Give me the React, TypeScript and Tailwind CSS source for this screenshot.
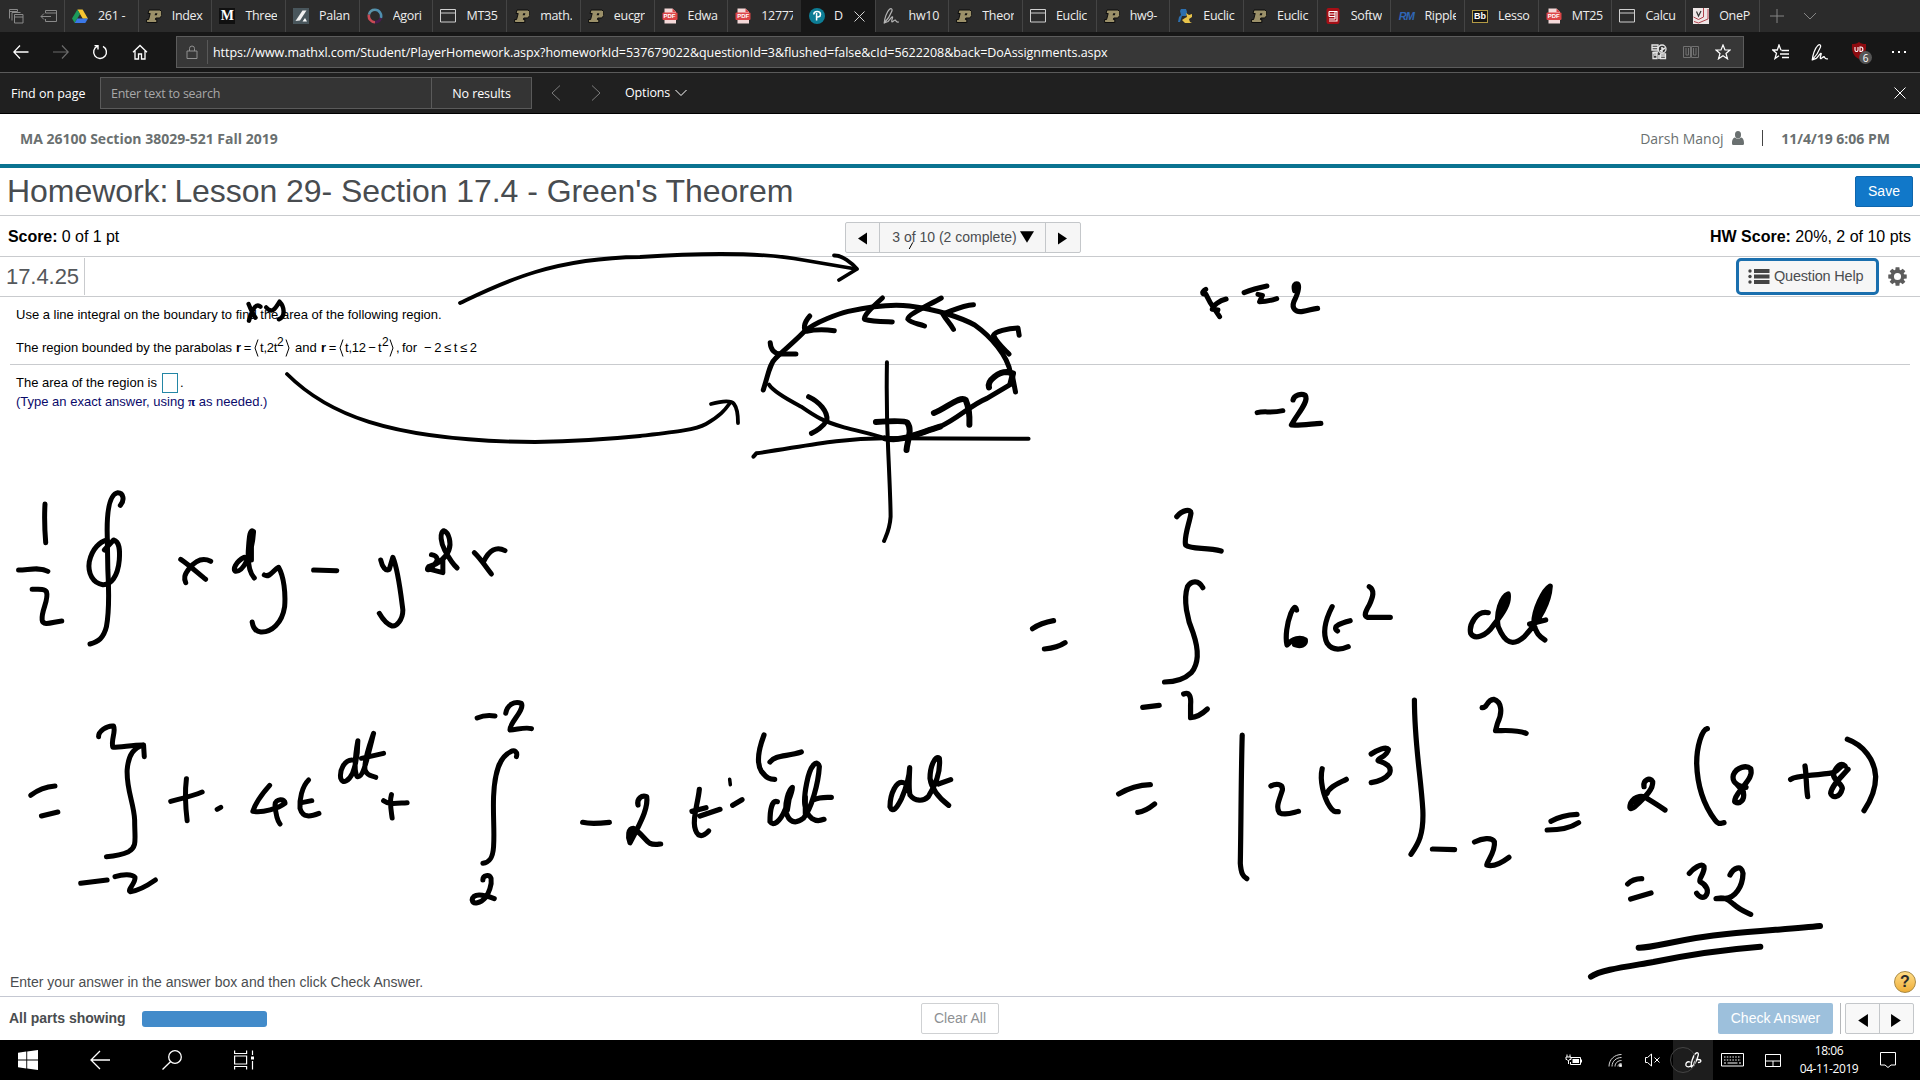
import React from "react";

type Kind = "drive" | "purdue" | "medium" | "palan" | "agori" | "page" | "pdf" | "pearson" | "ink" | "python" | "soft" | "rm" | "bb" | "onep";

const TABS: { label: string; kind: Kind; active?: boolean }[] = [
  { label: "261 -", kind: "drive" },
  { label: "Index", kind: "purdue" },
  { label: "Three", kind: "medium" },
  { label: "Palan", kind: "palan" },
  { label: "Agori", kind: "agori" },
  { label: "MT35", kind: "page" },
  { label: "math.", kind: "purdue" },
  { label: "eucgr", kind: "purdue" },
  { label: "Edwa", kind: "pdf" },
  { label: "12777", kind: "pdf" },
  { label: "D", kind: "pearson", active: true },
  { label: "hw10", kind: "ink" },
  { label: "Theor", kind: "purdue" },
  { label: "Euclic", kind: "page" },
  { label: "hw9-", kind: "purdue" },
  { label: "Euclic", kind: "python" },
  { label: "Euclic", kind: "purdue" },
  { label: "Softw", kind: "soft" },
  { label: "Ripple", kind: "rm" },
  { label: "Lesso", kind: "bb" },
  { label: "MT25", kind: "pdf" },
  { label: "Calcu", kind: "page" },
  { label: "OneP", kind: "onep" },
];

function Favicon({ kind }: { kind: Kind }) {
  const box = "h-4 w-4 shrink-0";
  switch (kind) {
    case "drive":
      return (
        <svg className={box} viewBox="0 0 16 16">
          <path d="M5.4 1.5h5.2L16 10.8h-5.2z" fill="#f7c631" />
          <path d="M5.4 1.5 8 6 2.7 15 0 10.6z" fill="#1c9a5b" />
          <path d="M5.3 10.6H16L13.3 15H2.7z" fill="#3b78e7" />
        </svg>
      );
    case "purdue":
      return (
        <svg className={box} viewBox="0 0 16 16">
          <path d="M3 2h11l1.700 1.700v4L13.700 10H9.800l-.4 1.500h1.400v3H.6v-3h2L4.200 5.500H2z" fill="#9b9069" stroke="#0d0d0d" strokeWidth="1" />
          <path d="M9.200 5.200h2.200l-.6 2h-2.200z" fill="#111" />
        </svg>
      );
    case "medium":
      return (
        <span className="flex h-4 w-4 shrink-0 items-center justify-center bg-[#101010] font-['Liberation_Serif',serif] text-[14px] leading-none font-bold text-white">M</span>
      );
    case "palan":
      return (
        <svg className={box} viewBox="0 0 16 16">
          <rect width="16" height="16" fill="#49565c" />
          <path d="M2.500 13 9.500 2.500h4L7 12.500z" fill="#f1f1f1" />
          <path d="M9.500 13.500 12 10l2 3.500z" fill="#fff" />
        </svg>
      );
    case "agori":
      return (
        <svg className={box} viewBox="0 0 16 16" fill="none" strokeWidth="2.600">
          <path d="M8 1.800A6.200 6.200 0 0 1 13.800 10" stroke="#4f8fb0" />
          <path d="M13.800 10A6.200 6.200 0 0 1 8 14.200" stroke="#4a1d4f" />
          <path d="M8 14.200A6.200 6.200 0 0 1 2 6.500" stroke="#c84a55" />
          <path d="M2 6.500A6.200 6.200 0 0 1 8 1.800" stroke="#5b93a8" />
        </svg>
      );
    case "page":
      return (
        <svg className={box} viewBox="0 0 16 16" fill="none" stroke="#cfcfcf" strokeWidth="1">
          <path d="M.5 1.500h15v12.500H.5zM.5 5h15" />
        </svg>
      );
    case "pdf":
      return (
        <span className="relative flex h-4 w-4 shrink-0 items-center justify-center">
          <svg className="absolute inset-0 h-4 w-4" viewBox="0 0 16 16">
            <path d="M2.500 .5h8l3.500 3.500V15.500H2.500z" fill="#f5d9d9" />
            <path d="M10.500 .5 14 4h-3.500z" fill="#d44" />
            <rect x=".5" y="4.500" width="15" height="7.500" rx="1" fill="#dc4547" />
          </svg>
          <span className="relative font-['Liberation_Sans',sans-serif] text-[6px] leading-none font-bold text-white">PDF</span>
        </span>
      );
    case "pearson":
      return (
        <svg className={box} viewBox="0 0 16 16" fill="none">
          <circle cx="8" cy="8" r="8" fill="#0d7d95" />
          <path d="M4.800 6.500c0-4 6.700-4 6.700 0 0 2.800-3.500 3-4.300 1.300M7.600 5v7.500" stroke="#fff" strokeWidth="1.500" />
        </svg>
      );
    case "ink":
      return <PenIcon className="h-4 w-4 shrink-0 text-[#b5b5b5]" />;
    case "python":
      return (
        <svg className={box} viewBox="0 0 16 16">
          <path d="M4 1h5l1 3-1 4H5l-2 6H1l1-5 2-2-1-4z" fill="#2d6fae" />
          <path d="M9 5l3 2 3-1v3l-3 2 1 3 2 1H8l-3-3 3-2 2-1z" fill="#e8c34a" />
        </svg>
      );
    case "soft":
      return (
        <svg className={box} viewBox="0 0 16 16">
          <rect x="1.500" y="0" width="13" height="16" rx="2" fill="#a60f16" />
          <path d="M4 3.500h8v9.500H4M4 3.500v5M4 6h6M4 8.500h6M4 11h6M10 3.500V11" fill="none" stroke="#fff" strokeWidth="1.100" />
        </svg>
      );
    case "rm":
      return (
        <span className="flex h-4 w-4 shrink-0 items-center justify-center font-['Liberation_Sans',sans-serif] text-[11px] leading-none font-bold tracking-[-1px] text-[#2f66b5] italic">RM</span>
      );
    case "bb":
      return (
        <span className="flex h-[13px] w-4 shrink-0 items-center justify-center border border-[#b39a44] bg-[#161616] font-['Liberation_Sans',sans-serif] text-[9px] leading-none font-bold text-white">Bb</span>
      );
    case "onep":
      return (
        <svg className={box} viewBox="0 0 16 16" fill="none">
          <rect width="16" height="16" fill="#efe7e7" />
          <path d="M10.500 0v9l-5 2.500-5-2.500M1 13.500l4.500 1.500 9.500-4V1" stroke="#b2434c" strokeWidth="1" />
          <path d="M3.500 3.500 5.500 8l2.500-5" stroke="#333" strokeWidth="1.200" />
        </svg>
      );
  }
}

function PenIcon({ className }: { className: string }) {
  return (
    <svg className={className} viewBox="0 0 16 16" fill="none" stroke="currentColor" strokeWidth="1.200" strokeLinecap="round" strokeLinejoin="round">
      <path d="M1.200 15C1.500 11 3.500 4 6.500 1.300 8.300-.1 9.600 1 8.800 3.200 7.600 6.500 4.500 11.500 1.200 15M2 10.500 1.200 15 5 13.500C6.500 12 8 9.500 9.200 8.800 10.500 8.500 8.300 12 8.800 13.500 9.300 14.800 11 12 12.200 12 13.200 12.200 12.500 14.500 15.500 14" />
    </svg>
  );
}

function TabStrip() {
  return (
    <div className="flex h-8 bg-[#2b2b2b] text-[#ededed]">
      <div className="flex w-16 shrink-0 items-center gap-4 pl-[9px] text-[#8a8a8a]">
        <svg className="h-4 w-[15px]" viewBox="0 0 15 16" fill="none" stroke="currentColor">
          <path d="M.5 10.500V1.500h8M.5 3.500h8v-2M3 12.500V4.500h8.500M5.500 6.500h8.500v8.500H5.500zM5.500 9h8.500" />
        </svg>
        <svg className="h-4 w-[17px]" viewBox="0 0 17 16" fill="none" stroke="currentColor">
          <path d="M5.500 5V2.500h11v11h-11V11M5.500 5h11M1 8.500h10M4 5.500l-3 3 3 3" />
        </svg>
      </div>
      {TABS.map((t, i) =>
        t.active ? (
          <div key={i} className="flex w-[73.700px] shrink-0 items-center bg-[#171717] pl-2">
            <Favicon kind={t.kind} />
            <span className="ml-[9px] text-[12.500px]">{t.label}</span>
            <svg className="ml-[11px] h-[11px] w-[11px]" viewBox="0 0 11 11" fill="none" stroke="#d5d5d5">
              <path d="M.5.5l10 10M10.500.5l-10 10" />
            </svg>
          </div>
        ) : (
          <div key={i} className="flex w-[73.700px] shrink-0 items-center border-l border-[#444] pl-[7px]">
            <Favicon kind={t.kind} />
            <span className="ml-[10px] w-[31.500px] overflow-hidden text-[12.500px] tracking-[-0.300px] whitespace-nowrap">{t.label}</span>
          </div>
        ),
      )}
      <div className="flex flex-1 items-center gap-[19px] border-l border-[#444] pl-[10px] text-[#858585]">
        <svg className="h-[14px] w-[14px]" viewBox="0 0 14 14" fill="none" stroke="currentColor">
          <path d="M7 0v14M0 7h14" />
        </svg>
        <svg className="h-[8px] w-[14px]" viewBox="0 0 14 8" fill="none" stroke="currentColor">
          <path d="M1 1l6 6 6-6" />
        </svg>
      </div>
    </div>
  );
}

function AddressBar() {
  return (
    <div className="flex h-10 items-center bg-[#171717] text-white">
      <svg className="ml-[13px] h-4 w-4" viewBox="0 0 16 16" fill="none" stroke="currentColor" strokeWidth="1.300">
        <path d="M15.500 8H1M7 1.500.8 8 7 14.500" />
      </svg>
      <svg className="ml-[24px] h-4 w-4 text-[#6b6b6b]" viewBox="0 0 16 16" fill="none" stroke="currentColor" strokeWidth="1.200">
        <path d="M0 8h14.500M9 1.500 15.200 8 9 14.500" />
      </svg>
      <svg className="ml-[23px] h-4 w-4" viewBox="0 0 16 16" fill="none" stroke="currentColor" strokeWidth="1.400">
        <path d="M5.500 2.200A6.400 6.400 0 1 0 11 2.400M2.500 1.600h3.500v4" />
      </svg>
      <svg className="ml-[24px] h-4 w-4" viewBox="0 0 16 16" fill="none" stroke="currentColor" strokeWidth="1.300">
        <path d="M1 8.300 8 1.500l7 6.800M3 7v8h3.500v-5h3v5H13V7" />
      </svg>
      <div className="ml-[28px] flex h-8 w-[1568px] items-center border border-[#5c5c5c] bg-[#373737]">
        <svg className="ml-[9px] h-[14px] w-[12px]" viewBox="0 0 12 14" fill="none" stroke="#909090">
          <path d="M1 6h10v7.500H1zM3.500 6V3.500a2.500 2.500 0 0 1 5 0V6" />
        </svg>
        <div className="ml-[9px] h-6 w-px bg-[#585858]" />
        <span className="mt-[2px] ml-[5px] flex-1 text-[12.500px] tracking-[-0.042px] whitespace-nowrap">
          https://www.mathxl.com/Student/PlayerHomework.aspx?homeworkId=537679022&amp;questionId=3&amp;flushed=false&amp;cId=5622208&amp;back=DoAssignments.aspx
        </span>
        <svg className="h-4 w-4" viewBox="0 0 16 16" fill="none" stroke="#e6e6e6" strokeWidth="1.300">
          <path d="M1 1h6v5H1zM1 3.500h6M2 14.500V9h4v5.500zM9.500 10h5v4.500h-5z" />
          <circle cx="11" cy="5" r="4" />
          <path d="M11 3v5M9 7l5-3M1.500 8.500 7 8M8 11v4M3 11h3M10 12h4" strokeWidth="1.600" />
        </svg>
        <svg className="ml-[16px] h-[14px] w-4" viewBox="0 0 16 14" fill="none" stroke="#717171">
          <path d="M.5 1.500h7v11h-7zM8.500 1.500h7v11h-7zM3 3v7h2.500V3M10.500 3v7H13V3" />
        </svg>
        <svg className="mr-[12px] ml-[16px] h-4 w-4" viewBox="0 0 16 16" fill="none" stroke="#fff" strokeWidth="1.200">
          <path d="M8 1l2 5h5l-4 3.500 1.500 5.300L8 11.700l-4.500 3.100L5 9.500 1 6h5z" />
        </svg>
      </div>
      <svg className="ml-[28px] h-4 w-[17px]" viewBox="0 0 17 16" fill="none" stroke="#fff" strokeWidth="1.300">
        <path d="M9 6.200 7 1 5.300 6H.8l3.700 3.300L3 14.500l4-2.800M9.500 6.500H17M8 10h9M10 13.500h7" />
      </svg>
      <PenIcon className="ml-[22px] h-[17px] w-[17px] text-white" />
      <div className="relative ml-[23px] h-5 w-[20px]">
        <svg className="h-[17px] w-[16px]" viewBox="0 0 16 17">
          <path d="M8 0c2.500 2 5 2 7 2 .5 7-1 12-7 15C2 14 .5 9 1 2c2 0 4.500 0 7-2z" fill="#8d0b10" />
          <path d="M4 5v3a1.500 1.500 0 0 0 3 0V5M9 5v4.500h1c2.500 0 2.500-4.500 0-4.500z" fill="none" stroke="#fff" strokeWidth="1.100" />
        </svg>
        <span className="absolute top-[9px] left-[8px] flex h-[13px] w-[13px] items-center justify-center rounded-full bg-[#555] text-[10px] leading-none">6</span>
      </div>
      <svg className="ml-[20px] h-[4px] w-4" viewBox="0 0 16 4" fill="#fff">
        <path d="M1 1h2v2H1zM7 1h2v2H7zM13 1h2v2h-2z" />
      </svg>
    </div>
  );
}

function FindBar() {
  return (
    <div className="flex h-[42px] items-center border-t-[1.500px] border-b border-t-[#5a5a5a] border-b-black bg-[#202020] text-[12.500px] text-white">
      <span className="mt-[2px] w-[100px] pl-[11px] tracking-[-0.050px]">Find on page</span>
      <div className="flex h-8 w-[432px] items-center border border-[#5a5a5a] bg-[#343434]">
        <span className="mt-[2px] flex-1 pl-[10px] tracking-[-0.250px] text-[#a8a8a8]">Enter text to search</span>
        <span className="flex h-full w-[100px] items-center justify-center border-l border-[#5a5a5a] pt-[2px] tracking-[-0.100px]">No results</span>
      </div>
      <svg className="ml-[19px] h-4 w-[10px]" viewBox="0 0 10 16" fill="none" stroke="#7c7c7c">
        <path d="M9 .5 1 8l8 7.500" />
      </svg>
      <svg className="ml-[30px] h-4 w-[10px]" viewBox="0 0 10 16" fill="none" stroke="#7c7c7c">
        <path d="M1 .5 9 8l-8 7.500" />
      </svg>
      <span className="ml-[24px] tracking-[-0.150px]">Options</span>
      <svg className="ml-[5px] h-[8px] w-[12px]" viewBox="0 0 12 8" fill="none" stroke="#fff">
        <path d="M.5 1 6 6.500 11.500 1" />
      </svg>
      <svg className="mr-[14px] ml-auto h-[12px] w-[12px]" viewBox="0 0 12 12" fill="none" stroke="#fff">
        <path d="M.5.5l11 11M11.500.5l-11 11" />
      </svg>
    </div>
  );
}

function Tri({ dir, className }: { dir: "left" | "right" | "down"; className: string }) {
  const d = dir === "left" ? "M10 0v12L1 6z" : dir === "right" ? "M0 0v12l9-6z" : "M-1 1h12L5 11z";
  return (
    <svg className={className} viewBox="-1 0 12 12" fill="#000">
      <path d={d} />
    </svg>
  );
}

function Angle({ flip, className }: { flip?: boolean; className: string }) {
  return (
    <svg className={className} viewBox="0 0 5 18" fill="none" stroke="#000">
      <path d={flip ? "M1 .5 4 9 1 17.500" : "M4 .5 1 9l3 8.500"} />
    </svg>
  );
}

function Question() {
  return (
    <div className="flex-1 font-['Liberation_Sans',sans-serif] text-[13px] text-black">
      <div className="mx-[10px] h-[68px] border-b border-[#c9cbce] pl-[6px]">
        <p className="pt-[8px] leading-[20px] whitespace-nowrap">Use a line integral on the boundary to find the area of the following region.</p>
        <div className="mt-[12px] flex h-[22px] items-center leading-[20px] whitespace-nowrap">
          <span className="w-[220px]">The region bounded by the parabolas</span>
          <span className="w-[18px] tracking-[-0.500px]"><b>r</b> =</span>
          <Angle className="h-[18px] w-[5px]" />
          <span className="ml-[1px] w-[17px] tracking-[-0.200px]">t,2t</span>
          <sup className="-top-[6px] w-[8px] text-[12px] leading-none">2</sup>
          <Angle flip className="h-[18px] w-[5px]" />
          <span className="ml-[5px] w-[26px]">and</span>
          <span className="w-[18px] tracking-[-0.500px]"><b>r</b> =</span>
          <Angle className="h-[18px] w-[5px]" />
          <span className="ml-[1px] w-[37px] tracking-[-0.200px]">t,12&thinsp;−&thinsp;t</span>
          <sup className="-top-[6px] w-[7px] text-[12px] leading-none">2</sup>
          <Angle flip className="h-[18px] w-[5px]" />
          <span className="ml-[2px] w-[6px]">,</span>
          <span className="w-[22px]">for</span>
          <span>−&thinsp;2&thinsp;≤&thinsp;t&thinsp;≤&thinsp;2</span>
        </div>
      </div>
      <div className="pt-[7px] pl-4">
        <div className="flex h-[22px] items-center whitespace-nowrap">
          <span className="w-[146px]">The area of the region is</span>
          <span className="h-[20px] w-[16px] border border-[#2386a5] bg-white" />
          <span className="ml-[2px]">.</span>
        </div>
        <p className="leading-[16px] whitespace-nowrap text-[#0a0a6b]">
          (Type an exact answer, using <span className="font-['Liberation_Serif',serif] leading-none font-bold">π</span> as needed.)
        </p>
      </div>
    </div>
  );
}

/* Pen strokes, grouped by the region of the page they were written in. */
const INK: { t: string; w: number; d: string[] }[] = [
  {
    t: "",
    w: 3.800,
    d: [
      "M460 303C500 284 550 258 640 257C700 253 760 252 803 260L856 269",
      "M834 255.500C842 255 852 263 857 269L839 280",
      "M287 374C325 412 385 441 535 442C590 441 640 436 640 436C675 432 695 430 706 424C720 416 725 410 730 403",
      "M711 404C722 401 731 400 734 404C738 409 738 417 738 423",
    ],
  },
  {
    t: "translate(0 120) scale(.408163 .333333)",
    w: 4.400,
    d: ["M609 552C615 570 620 585 626 593M638 560C625 545 615 580 610 602", "M652 562C665 580 672 572 685 545C697 560 700 590 683 598"],
  },
  { t: "translate(640 220) scale(.408163 .333333)", w: 1, d: ["M668 68L660 86"] },
  {
    t: "translate(640 220) scale(.408163 .333333)",
    w: 4,
    d: [
      "M605 427C604 500 606 640 608 690C612 800 614 850 614 890C612 930 602 950 598 963",
      "M278 710L285 700C400 680 480 655 600 655L952 656",
      "M316 494C330 520 380 550 395 560C430 590 450 605 500 622C540 635 580 645 600 655",
    ],
  },
  {
    t: "translate(640 220) scale(.408163 .333333)",
    w: 5,
    d: [
      "M302 510C315 460 318 430 332 415L343 402C365 378 390 350 402 335C430 305 490 280 510 274C570 258 620 252 660 258C730 268 790 295 820 315C860 350 900 405 908 460",
      "M319 368C320 390 330 402 345 402L382 402",
      "M416 288C400 310 400 330 408 334C430 328 450 328 476 332",
      "M594 234C570 260 545 290 550 298C570 305 600 305 618 306",
      "M738 234C700 260 655 285 656 297C665 310 680 310 697 318",
      "M817 254C790 255 760 275 742 282C750 300 760 310 768 328",
      "M929 346L926 324C900 325 870 335 866 346C875 370 890 385 904 402",
      "M413 530C440 545 460 575 458 600C450 620 430 635 420 640",
      "M600 655C640 665 670 645 735 620C780 595 810 555 850 535L912 490L912 465L920 516",
      "M1386 208C1376 215 1376 224 1386 222L1397 248L1420 290M1436 237C1420 242 1404 255 1402 268L1416 270",
      "M1480 218C1500 208 1520 202 1536 198M1514 223L1525 226L1518 245C1535 245 1550 240 1560 236",
      "M1512 578C1530 572 1545 580 1575 572",
    ],
  },
  {
    t: "translate(640 220) scale(.408163 .333333)",
    w: 6,
    d: [
      "M855 502C850 480 880 455 900 456L914 460L908 490",
      "M578 606C620 602 650 602 655 608C668 630 655 660 653 690",
      "M720 579C750 565 785 525 798 540C805 560 808 590 807 614",
      "M600 655C640 665 670 645 735 620",
    ],
  },
  {
    t: "translate(1280 120) scale(.408163 .333333)",
    w: 5.200,
    d: ["M36 512C32 495 38 490 43 492C50 500 42 525 34 545C28 565 38 578 56 574C70 572 80 566 92 565", "M32 840C34 825 52 820 62 826C72 845 40 885 28 915C50 917 80 911 100 910"],
  },
  {
    t: "translate(0 470) scale(.357143 .333333)",
    w: 5,
    d: [
      "M126 102C124 140 125 180 128 218",
      "M52 300C80 300 110 290 134 304",
      "M90 358C105 358 125 355 130 365C138 390 115 420 118 450C120 470 150 455 173 453",
      "M337 106C350 90 345 68 330 68C310 72 300 110 300 180L302 300C306 380 305 430 298 470C290 505 275 515 252 522",
      "M292 240L318 210C335 215 336 240 334 270C330 320 310 345 288 344C260 340 245 310 250 275C258 235 280 215 300 210",
      "M506 268C530 285 560 315 576 328M590 274C565 260 545 275 530 295C515 315 515 325 520 338",
      "M684 262C660 275 650 300 660 304C680 305 705 260 710 185C700 175 698 200 696 230C692 280 700 310 712 324M704 190L704 270",
      "M740 315C755 325 765 300 780 292C795 320 800 370 797 410C790 460 760 488 730 486C712 484 708 470 706 456",
      "M878 300L943 302",
      "M1066 270C1070 290 1080 305 1090 298L1100 262C1115 300 1122 370 1128 420C1128 450 1110 470 1098 468C1080 462 1070 445 1062 430",
      "M1208 254C1226 258 1230 270 1214 286C1200 304 1192 302 1200 290C1225 282 1248 265 1257 240C1264 220 1258 188 1242 182C1230 190 1235 220 1245 240C1255 260 1270 285 1280 294M1205 298L1240 308L1240 270",
      "M1328 248C1345 265 1360 290 1376 312M1414 242C1390 228 1370 240 1354 275",
      "M86 976C105 960 130 950 154 948M116 1038L162 1026",
      "M276 800C275 785 300 765 318 768C325 785 310 810 316 832C340 832 370 825 400 825",
      "M404 860L402 825C375 835 360 850 356 900C354 960 375 1000 377 1050C377 1110 385 1130 360 1145C340 1155 320 1158 298 1160",
      "M226 1240L300 1230M322 1220C345 1212 370 1212 378 1222C380 1240 355 1260 365 1265C390 1262 415 1245 435 1230",
      "M522 926C518 960 518 1000 524 1052M478 994C510 985 540 978 566 966",
      "M608 1018L618 1012",
      "M755 946C735 970 715 1000 708 1024C735 1030 780 1015 798 1000C800 985 770 985 770 1005C772 1030 775 1050 784 1062",
      "M864 930C845 950 838 990 840 1015C848 1045 870 1040 893 1030M845 998L873 992",
      "M985 870C965 870 950 900 954 925C960 945 978 930 987 910C998 880 1002 840 1002 812C994 860 990 900 1000 920C1016 925 1025 880 1046 790C1040 810 1018 870 1022 900C1030 920 1040 916 1052 922M1012 865L1074 850",
      "M1096 974C1090 995 1095 1020 1098 1044M1074 992C1090 1005 1110 1000 1140 998",
      "M1336 744C1355 735 1370 735 1386 738M1416 730C1420 705 1440 692 1460 700C1470 720 1425 760 1428 780C1445 780 1470 770 1488 776",
      "M1446 860C1450 845 1440 838 1430 845C1400 860 1385 900 1382 980C1380 1040 1385 1080 1382 1130C1380 1165 1370 1178 1352 1180",
      "M1352 1230C1352 1215 1370 1212 1375 1225C1378 1245 1368 1270 1360 1282C1345 1300 1325 1305 1322 1290C1325 1270 1350 1272 1384 1286",
    ],
  },
  {
    t: "translate(540 640) scale(.333333)",
    w: 5.200,
    d: [
      "M128 547C150 552 180 550 208 547",
      "M294 495C290 475 305 465 320 470C325 500 305 540 290 570L270 608C262 590 265 565 280 565C300 575 315 600 330 610C340 615 350 613 362 612M275 575L282 585",
      "M478 448C474 490 458 530 464 560C470 590 485 595 506 573M456 514L498 503M480 528L540 508",
      "M578 496L606 479",
      "M672 285C655 330 648 370 665 395C680 415 690 418 704 418M690 366C705 345 740 350 784 336",
      "M712 485C695 480 690 510 690 545C700 560 720 545 735 510C745 480 757 460 757 442C745 450 735 490 738 515C745 545 765 555 790 535C815 505 835 430 838 380C832 355 810 375 800 430C790 480 790 515 815 535C830 545 840 542 852 538M820 480C840 470 855 472 874 472M750 460L742 510M796 470L796 520",
      "M1090 428C1070 420 1050 460 1050 500C1058 520 1070 505 1085 475C1100 440 1108 410 1109 383C1108 420 1105 445 1110 465C1125 485 1150 485 1165 470C1190 430 1202 390 1198 355C1185 345 1170 380 1170 415C1175 450 1205 480 1226 496M1195 432L1232 419",
    ],
  },
  { t: "translate(540 640) scale(.333333)", w: 3.500, d: ["M569 418L571 434"] },
  {
    t: "translate(1000 490) scale(.382653 .333333)",
    w: 5.200,
    d: [
      "M462 80C475 60 500 55 499 70C495 100 480 140 485 165C500 180 540 170 578 183",
      "M530 293C520 270 500 270 490 290C478 330 490 390 505 430C520 480 520 520 500 548C480 570 455 576 430 576",
      "M85 416C105 400 120 396 140 392M116 477C135 475 155 470 170 458",
      "M373 652L416 646M480 612C495 605 500 620 498 645L498 683C515 682 530 670 542 657",
      "M775 360C772 345 765 355 760 370C750 400 745 440 750 465C765 445 785 440 798 450C800 465 785 470 770 464L795 456",
      "M868 350C850 390 842 430 855 460C868 482 890 480 910 470M915 392C895 398 865 408 882 423",
      "M965 290C980 300 975 320 965 345C955 365 950 378 960 382L1020 382",
      "M1276 368C1245 360 1225 405 1230 430C1240 450 1270 440 1290 405C1315 370 1332 340 1328 312C1310 320 1295 370 1302 410C1320 460 1340 470 1370 440C1410 390 1435 340 1438 288C1420 300 1395 360 1395 400C1400 430 1410 440 1424 450M1384 402L1426 390M1318 330L1305 380M1430 310L1405 370",
      "M310 912C335 895 365 885 393 884M360 967C375 965 390 955 404 942",
      "M633 735C630 850 630 1000 628 1120C630 1150 635 1160 645 1166",
      "M708 888C720 880 740 880 738 900C730 930 720 950 730 968C745 978 765 968 780 964",
      "M842 836C835 870 845 920 862 950C870 965 875 965 884 965M905 868C885 880 860 890 855 910",
      "M970 792C985 780 1010 768 1015 778C1012 800 985 805 988 812C1010 820 1025 830 1018 850C1005 870 985 875 970 878",
      "M1083 630C1083 760 1100 860 1105 960C1108 1040 1090 1065 1074 1093",
      "M1130 1077L1188 1079M1240 1056C1260 1045 1285 1040 1292 1055C1295 1085 1275 1110 1272 1125C1290 1132 1315 1115 1330 1102",
      "M1260 653C1275 655 1270 630 1290 628C1310 635 1315 665 1300 700L1295 722C1320 722 1350 718 1375 730",
      "M1440 994C1460 980 1485 974 1508 973M1430 1020C1460 1020 1490 1015 1512 998",
    ],
  },
  {
    t: "translate(1480 680) scale(.333333)",
    w: 5.300,
    d: [
      "M492 320C488 300 510 290 518 305C520 330 490 355 470 375C455 390 445 390 452 370C465 345 490 345 505 358C525 370 540 380 555 390M460 365L475 360",
      "M682 146C665 150 650 200 650 250C652 320 675 380 705 420C715 435 722 430 732 428",
      "M798 322C770 318 755 305 760 285C770 260 800 255 812 266C818 285 805 300 790 320C780 335 765 345 764 365C780 375 795 360 790 335L770 312",
      "M932 298C950 285 1000 288 1060 278M975 258C980 290 978 320 983 350",
      "M1095 258C1080 245 1065 265 1060 285C1065 305 1085 310 1087 325C1080 355 1055 355 1052 340C1055 315 1085 290 1104 268M1088 255L1070 272",
      "M1102 178C1150 195 1185 240 1187 290C1187 330 1170 365 1152 392",
      "M443 612C455 600 470 596 485 596M452 657L513 639",
      "M628 580C640 565 665 548 672 560C675 580 655 595 660 605C680 615 690 635 675 650C665 655 655 648 650 640",
      "M750 585C760 565 785 552 789 580C788 620 765 655 735 655L708 656C735 650 745 660 760 672C780 690 795 695 812 703",
    ],
  },
  {
    t: "translate(1480 680) scale(.333333)",
    w: 6,
    d: ["M476 803C520 805 600 775 740 762C850 752 950 745 1020 738", "M333 890C360 870 440 860 520 846C620 825 740 808 841 800"],
  },
];

function InkLayer() {
  return (
    <svg className="pointer-events-none absolute inset-0 h-[1080px] w-[1920px]" viewBox="0 0 1920 1080" fill="none" stroke="#000" strokeLinecap="round" strokeLinejoin="round">
      {INK.map((g, i) => (
        <g key={i} transform={g.t || undefined} strokeWidth={g.w}>
          {g.d.map((d, j) => (
            <path key={j} d={d} vectorEffect="non-scaling-stroke" />
          ))}
        </g>
      ))}
    </svg>
  );
}

function Taskbar() {
  return (
    <div className="flex h-10 items-center bg-black text-white">
      <svg className="ml-[18px] h-5 w-5" viewBox="0 0 20 20" fill="#fff">
        <path d="M0 2.800 8.300 1.600v7.900H0zM9.200 1.500 20 0v9.500H9.200zM0 10.400h8.300v8L0 17.200zM9.200 10.400H20V20L9.200 18.500z" />
      </svg>
      <svg className="ml-[52px] h-5 w-5" viewBox="0 0 20 20" fill="none" stroke="#fff" strokeWidth="1.300">
        <path d="M20 10H1M10 1 1 10l9 9" />
      </svg>
      <svg className="ml-[52px] h-5 w-5" viewBox="0 0 20 20" fill="none" stroke="#fff" strokeWidth="1.300">
        <circle cx="13" cy="7" r="6.300" />
        <path d="M8.700 11.500.5 19.500" />
      </svg>
      <svg className="ml-[52px] h-5 w-5" viewBox="0 0 20 20" fill="none" stroke="#fff" strokeWidth="1.200">
        <path d="M.6.500V3.500h12V.5M.6 6h12v8H.6zM.6 19.500v-3h12v3M18.500.5V5M18.500 11v8.500" />
        <path d="M17 6.500h3v3h-3z" fill="#fff" stroke="none" />
      </svg>
      <div className="ml-auto flex items-center">
        <svg className="h-[14px] w-[17px]" viewBox="0 0 17 14" fill="none" stroke="#fff">
          <path d="M5.500 4.500h10v7h-10V9M16.500 6.500v3M1 4h5v2.500H4.500L3.500 8 2 6.500H1zM2 1.500V4M5 1.500V4M3.500 8v3" />
          <path d="M7.500 6h6.500v4H7.500z" fill="#fff" stroke="none" />
        </svg>
        <svg className="ml-[26px] h-[14px] w-[14px]" viewBox="0 0 14 14" fill="none" stroke="#d5d5d5">
          <path d="M1 13.500C1 6.500 6.500 1.500 13.500 1.500M4 13.500C4 8 8.500 4.500 13.500 4.500M7 13.500c0-3.500 3-6 6.500-6M10 13.500c0-2 1.500-3 3.500-3" />
          <path d="M11.500 11.500h2v2h-2z" fill="#fff" />
        </svg>
        <svg className="ml-[23px] h-[14px] w-[15px]" viewBox="0 0 15 14" fill="none" stroke="#fff">
          <path d="M.5 4.500h2l4-3.500v12l-4-3.500h-2zM9.500 4.500l5 5M14.500 4.500l-5 5" />
        </svg>
        <div className="relative ml-[13px] flex h-10 w-10 items-center justify-center bg-[#1d1d1d]">
          <span className="absolute top-[7px] -left-[3px] h-[26px] w-[26px] rounded-full border-[1.500px] border-[#444]" />
          <svg className="h-[17px] w-[17px]" viewBox="0 0 17 17" fill="none" stroke="#fff" strokeWidth="1.300" strokeLinecap="round">
            <path d="M5 10C2 9 .5 11 1 13.500c1 2 4 1.500 5.500 0M6.500 15C5.500 12 8 4 10.500 1.500 12.500 0 14 1 13 4 12 8 9 13 6.500 15M9 13.500C8.500 10 11 7.500 13.500 7.500 16.500 7.500 16.800 10.500 13.500 10.500" />
          </svg>
        </div>
        <svg className="ml-[8px] h-[14px] w-[23px]" viewBox="0 0 23 14" fill="none" stroke="#fff">
          <path d="M.5.5h22v12.500H.5z" />
          <path d="M3 4h17M3 7h17" strokeDasharray="1.500 1.300" />
          <path d="M3 10h2M6.500 10h10M18 10h2" />
        </svg>
        <svg className="ml-[21px] h-[13px] w-[16px]" viewBox="0 0 16 13" fill="none" stroke="#fff">
          <path d="M.5.5h15v12H.5zM.5 7h15M8 7v5.500" />
        </svg>
        <div className="ml-[17px] flex w-[62px] flex-col items-center text-[12px] leading-[18px] tracking-[-0.400px] whitespace-nowrap">
          <span>18:06</span>
          <span>04-11-2019</span>
        </div>
        <svg className="mr-[24px] ml-[20px] h-[16px] w-[16px]" viewBox="0 0 16 16" fill="none" stroke="#fff">
          <path d="M.5.5h15v12.500h-4.500l-3 2.500-3-2.500H.5z" />
        </svg>
      </div>
    </div>
  );
}

function Gear() {
  return (
    <svg className="h-[19px] w-[19px]" viewBox="-10 -10 20 20" fill="#5c5c5c">
      {[0, 45, 90, 135].map((a) => (
        <path key={a} d="M-2-9.700h4L2.500-5h-5zM-2 9.700h4L2.500 5h-5z" transform={`rotate(${a})`} />
      ))}
      <circle r="5.500" fill="none" stroke="#5c5c5c" strokeWidth="3.500" />
    </svg>
  );
}

export default function App() {
  return (
    <div className="relative flex h-[1080px] w-[1920px] flex-col overflow-hidden bg-white font-['Open_Sans','Noto_Sans',sans-serif]">
      <TabStrip />
      <AddressBar />
      <FindBar />

      <header className="flex h-[54px] items-center border-b-4 border-[#0a7391] pr-[30px] pb-[2px] pl-5 text-[14px] text-[#6a7070]">
        <span className="font-bold">MA 26100 Section 38029-521 Fall 2019</span>
        <span className="ml-auto">Darsh Manoj</span>
        <svg className="ml-[8px] h-[14px] w-[12px]" viewBox="0 0 12 13" preserveAspectRatio="none" fill="#6a7070">
          <ellipse cx="6" cy="3.500" rx="3" ry="3.500" />
          <path d="M3 6C.5 6.500 0 9 0 11.500c0 1 .8 1.500 1.500 1.500h9c.7 0 1.500-.5 1.500-1.500C12 9 11.500 6.500 9 6c-1.700 1.600-4.300 1.600-6 0z" />
        </svg>
        <span className="ml-[18px] h-4 w-[1.500px] bg-[#444]" />
        <span className="ml-[18px] font-bold">11/4/19 6:06 PM</span>
      </header>

      <div className="flex min-h-0 flex-1 flex-col font-['Liberation_Sans',sans-serif]">
        <div className="flex h-[48px] items-center border-b border-[#c9cbce] pr-[7px] pl-[7px]">
          <h1 className="flex gap-[6px] pb-[2px] text-[32px] leading-none tracking-[-0.050px] whitespace-nowrap text-[#484c50]">
            <span>Homework:</span>
            <span>Lesson 29- Section 17.4 - Green's Theorem</span>
          </h1>
          <button className="ml-auto h-[31px] w-[58px] rounded-[2px] border border-[#0f66ad] bg-[#1178c9] text-[14px] text-white">Save</button>
        </div>
        <div className="grid h-[41px] grid-cols-[1fr_236px_1fr] items-center border-b border-[#c9cbce] pt-[2px] pr-[9px] pl-[8px] text-[16px] text-black">
          <span className="tracking-[-0.060px]"><b>Score:</b> 0 of 1 pt</span>
          <div className="ml-[3px] flex h-[31px] w-[236px] rounded-[2px] border border-[#c4c7ca] bg-[#f6f6f6]">
            <span className="flex w-[34px] items-center justify-center border-r border-[#c4c7ca]"><Tri dir="left" className="mt-[2px] h-[13px] w-[12px]" /></span>
            <span className="flex flex-1 items-center justify-center border-r border-[#c4c7ca] pl-[2px] text-[14px] whitespace-nowrap text-[#4a4d50]">
              3 of 10 (2 complete)<Tri dir="down" className="ml-[3px] h-[14px] w-[14px]" />
            </span>
            <span className="flex w-[34px] items-center justify-center"><Tri dir="right" className="mt-[2px] ml-[1px] h-[13px] w-[12px]" /></span>
          </div>
          <span className="text-right"><b>HW Score:</b> 20%, 2 of 10 pts</span>
        </div>
        <div className="flex h-[40px] items-center border-b border-[#c9cbce]">
          <span className="flex h-[37px] w-[85px] items-center border-r border-[#c9cbce] pl-[6px] text-[22px] tracking-[-0.050px] text-[#55585c]">17.4.25</span>
          <button className="ml-auto flex h-[37px] w-[143px] items-center rounded-[5px] border-[3px] border-[#1a6fae] bg-[#f6f6f6] pl-[9px] text-[15px] text-[#4a4d50]">
            <svg className="h-[15px] w-[22px]" viewBox="0 0 22 15" fill="#444">
              <path d="M6 0h15.500v4H6zM6 5.500h15.500v4H6zM6 11h15.500v4H6z" />
              <circle cx="2" cy="2" r="1.700" /><circle cx="2" cy="7.500" r="1.700" /><circle cx="2" cy="13" r="1.700" />
            </svg>
            <span className="ml-[4px] text-[14.500px] tracking-[-0.200px] whitespace-nowrap">Question Help</span>
          </button>
          <span className="mr-[13px] ml-[9px]"><Gear /></span>
        </div>

        <Question />

        <div className="flex h-[28px] items-center justify-between pr-[4px] pl-[10px] text-[14px] text-[#4a4d50]">
          <span>Enter your answer in the answer box and then click Check Answer.</span>
          <span className="flex h-[22px] w-[22px] items-center justify-center rounded-full border border-[#a98a45] bg-linear-to-b from-[#ffdd85] to-[#eeae35] text-[16px] font-bold text-[#2b2b2b]">?</span>
        </div>
        <div className="grid h-[44px] grid-cols-[1fr_78px_1fr] items-center border-t border-[#c5c8d2] text-[14px]">
          <div className="flex items-center pl-[9px]">
            <b className="w-[133px] text-[#4a4d50]">All parts showing</b>
            <span className="h-4 w-[125px] rounded-[3px] bg-[#428bca]" />
          </div>
          <button className="h-[31px] rounded-[2px] border border-[#cfd1d3] bg-white text-[#8e9194]">Clear All</button>
          <div className="flex items-center justify-end pr-[6px]">
            <button className="h-[31px] w-[115px] rounded-[2px] bg-[#9dc0dc] text-white">Check Answer</button>
            <span className="ml-[7px] h-[31px] w-px bg-[#b5b7ba]" />
            <div className="ml-[4px] flex h-[31px] w-[69px] rounded-[2px] border border-[#c4c7ca] bg-[#f8f8f8]">
              <span className="flex flex-1 items-center justify-center border-r border-[#c4c7ca]"><Tri dir="left" className="mt-[3px] h-[13px] w-[13px]" /></span>
              <span className="flex flex-1 items-center justify-center"><Tri dir="right" className="mt-[3px] h-[13px] w-[13px]" /></span>
            </div>
          </div>
        </div>
      </div>
      <Taskbar />
      <InkLayer />
    </div>
  );
}
